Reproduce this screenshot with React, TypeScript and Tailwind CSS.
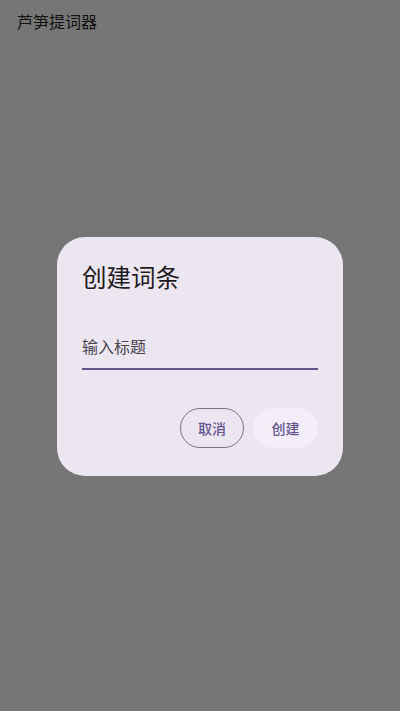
import React from 'react';

export default function App() {
  return (
    <div
      className="relative w-[400px] h-[711px] bg-[#767676] overflow-hidden"
      style={{ fontFamily: '"Noto Sans CJK SC", "Noto Sans", sans-serif' }}
    >
      {/* App title behind the scrim */}
      <div className="pl-[17px] pt-[9px] text-[16px] leading-6 text-[#111111]">芦笋提词器</div>

      {/* Dialog */}
      <div className="flex justify-center pt-[204px]">
        <div className="w-[286px] h-[239px] rounded-[28px] bg-[#ece6f0] pl-[25px] pr-[25px] pt-6 flex flex-col">
          <h2 className="text-[24.5px] leading-8 text-[#1d1b20]">创建词条</h2>
          <div className="mt-[41px] pb-[10px] border-b-2 border-[#65558f]">
            <span className="block text-[16px] leading-6 text-[#49454f]">输入标题</span>
          </div>
          <div className="mt-[38px] flex justify-end gap-[9px]">
            <button className="h-10 w-[64px] rounded-full border border-[#79747e] text-[14px] font-medium text-[#65558f]">
              取消
            </button>
            <button className="h-10 w-[65px] rounded-full bg-[#f3eef7] text-[14px] font-medium text-[#65558f]">
              创建
            </button>
          </div>
        </div>
      </div>
    </div>
  );
}
